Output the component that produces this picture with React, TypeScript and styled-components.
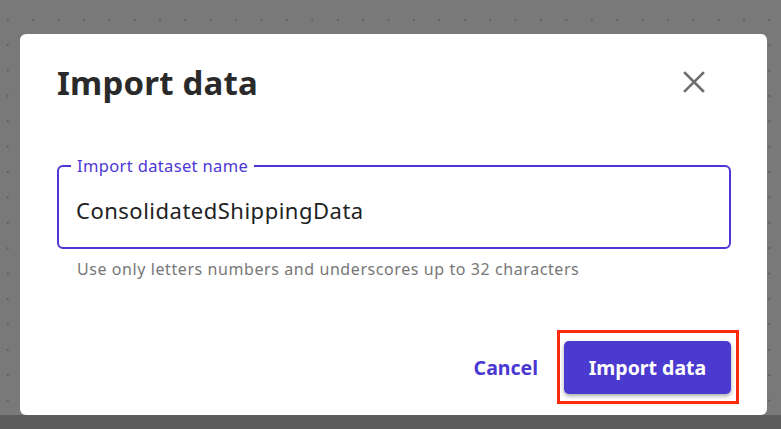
import React from "react";
import styled, { createGlobalStyle } from "styled-components";

const GlobalStyle = createGlobalStyle`
  html, body {
    margin: 0;
    padding: 0;
    font-family: "Noto Sans", "Open Sans", sans-serif;
  }
`;

const Backdrop = styled.div`
  width: 781px;
  height: 429px;
  box-sizing: border-box;
  padding: 34px 14px 0 20px;
  overflow: hidden;
  background-color: #797979;
  background-image: radial-gradient(circle, #5e5e5e 0.8px, transparent 1.2px);
  background-size: 25.4px 25.4px;
  background-position: -5px 7px;
  box-shadow: inset 0 -14px 0 #5d5d5d;
`;

const Dialog = styled.div`
  width: 747px;
  height: 381px;
  box-sizing: border-box;
  background: #ffffff;
  border-radius: 6px;
  padding: 26px 36px 0 37px;
  display: flex;
  flex-direction: column;
`;

const Header = styled.div`
  display: flex;
  align-items: center;
  justify-content: space-between;
  height: 44px;
`;

const Title = styled.h1`
  margin: 0;
  font-size: 33px;
  font-weight: 700;
  color: #2a2a2a;
  letter-spacing: 0.2px;
`;

const CloseButton = styled.button`
  border: none;
  background: none;
  padding: 0;
  margin-right: 25px;
  width: 24px;
  height: 24px;
  display: flex;
  align-items: center;
  justify-content: center;
  cursor: pointer;
`;

const Field = styled.fieldset`
  margin: 52px 0 0 0;
  padding: 0;
  height: 93px;
  box-sizing: border-box;
  border: 2.5px solid #4c37d6;
  border-radius: 6px;
`;

const Legend = styled.legend`
  margin-left: 12px;
  padding: 0 6px;
  font-size: 16.5px;
  line-height: 20px;
  letter-spacing: 0.35px;
  color: #4c37d6;
`;

const TextInput = styled.input`
  display: block;
  box-sizing: border-box;
  border: none;
  outline: none;
  width: 100%;
  height: 30px;
  margin-top: 19px;
  padding: 0 0 0 17px;
  font-family: inherit;
  font-size: 22px;
  letter-spacing: 0.5px;
  color: #222222;
  background: transparent;
`;

const Hint = styled.div`
  margin: 9px 0 0 20px;
  font-size: 16px;
  letter-spacing: 0.58px;
  color: #777777;
`;

const Footer = styled.div`
  margin-top: auto;
  margin-bottom: 11px;
  display: flex;
  justify-content: flex-end;
  align-items: center;
  gap: 19px;
  margin-right: -8px;
`;

const LinkButton = styled.button`
  border: none;
  background: none;
  padding: 0;
  font-family: inherit;
  font-size: 19.5px;
  font-weight: 700;
  color: #4b37d2;
  cursor: pointer;
`;

const Highlight = styled.div`
  border: 3px solid #ff2a0a;
  padding: 8px 5px 7px 4px;
`;

const PrimaryButton = styled.button`
  border: none;
  border-radius: 5px;
  width: 167px;
  height: 53px;
  background: #4b3ad0;
  color: #ffffff;
  font-family: inherit;
  font-size: 19.5px;
  font-weight: 700;
  box-shadow: 0 2px 4px rgba(0, 0, 0, 0.35);
  cursor: pointer;
`;

const CloseIcon = () => (
  <svg width="22" height="22" viewBox="0 0 22 22">
    <path d="M2 2 L20 20 M20 2 L2 20" stroke="#6e6e6e" strokeWidth="2.6" strokeLinecap="square" />
  </svg>
);

export default function App() {
  return (
    <>
      <GlobalStyle />
      <Backdrop>
        <Dialog>
          <Header>
            <Title>Import data</Title>
            <CloseButton aria-label="Close">
              <CloseIcon />
            </CloseButton>
          </Header>
          <Field>
            <Legend>Import dataset name</Legend>
            <TextInput defaultValue="ConsolidatedShippingData" />
          </Field>
          <Hint>Use only letters numbers and underscores up to 32 characters</Hint>
          <Footer>
            <LinkButton>Cancel</LinkButton>
            <Highlight>
              <PrimaryButton>Import data</PrimaryButton>
            </Highlight>
          </Footer>
        </Dialog>
      </Backdrop>
    </>
  );
}
